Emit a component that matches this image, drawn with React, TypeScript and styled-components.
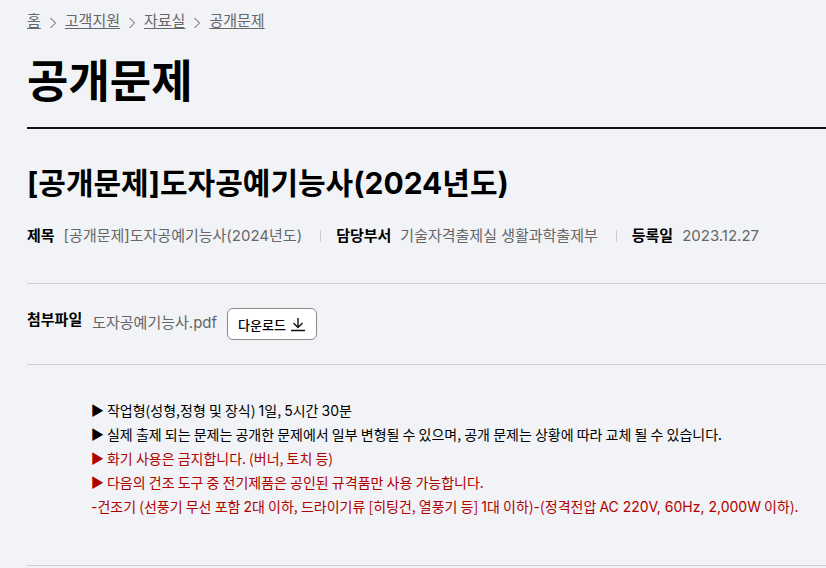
import React from "react";
import styled, { createGlobalStyle } from "styled-components";

const Global = createGlobalStyle`
  * { box-sizing: border-box; }
  body { margin: 0; background: #f1f3f6; color: #000; font-family: Inter, "Noto Sans CJK KR", sans-serif; }
  h1, h2, dl, dd, dt, p, ol { margin: 0; padding: 0; }
`;
const Page = styled.main`padding-left: 27px;`;
const Crumbs = styled.ol`
  display: flex; align-items: center; gap: 8px; list-style: none;
  padding-top: 11px; font-size: 15px; line-height: 20px;
`;
const Crumb = styled.li`display: flex; align-items: center; gap: 8px;`;
const CrumbLink = styled.a`color: #666; text-decoration: underline; text-underline-offset: 2px;`;
const Chevron = styled.svg`margin-top: 3px;`;
const Title = styled.h1`
  font-size: 45px; line-height: 60px; font-weight: 700;
  padding: 21px 0 15px; border-bottom: 2px solid #111;
`;
const Heading = styled.h2`font-size: 30px; line-height: 40px; font-weight: 700; padding-top: 34px;`;
const Meta = styled.dl`
  display: flex; align-items: center; padding: 21px 0 35px; font-size: 15px; line-height: 24px;
  border-bottom: 1px solid #ccced2; white-space: nowrap;
`;
const MetaItem = styled.div`
  display: flex; align-items: center; gap: 9px;
  & + &::before { content: ""; width: 1px; height: 12px; margin: 0 6px 0 18px; background: #ccced2; }
`;
const Term = styled.dt`font-weight: 700;`;
const Value = styled.dd`color: #666;`;
const Files = styled.section`
  display: flex; align-items: center; gap: 10px; padding: 24px 0;
  border-bottom: 1px solid #ccced2; font-size: 15px; line-height: 24px;
`;
const FilesLabel = styled.strong`padding-bottom: 8px;`;
const FileName = styled.span`color: #666; padding-bottom: 2px;`;
const Download = styled.button`
  display: flex; align-items: center; gap: 4px; height: 32px; padding: 0 10px;
  font: 500 13px Inter, "Noto Sans CJK KR", sans-serif; color: #000;
  background: #fff; border: 1px solid #8a8a8a; border-radius: 6px;
`;
const Body = styled.section`
  padding: 33px 0 47px 64px; border-bottom: 1px solid #ccced2; white-space: nowrap;
  font-family: "Noto Sans CJK KR", sans-serif; font-size: 14px; line-height: 24px;
`;
const Line = styled.p<{ $warn?: boolean }>`color: ${p => p.$warn ? "#b00000" : "#000"};`;
const Latin = styled.span`font-family: Inter, sans-serif; line-height: 1;`;
const Arrow = styled.span`font-family: Inter, "Noto Sans CJK KR", sans-serif; line-height: 1;`;

const crumbs = ["홈", "고객지원", "자료실", "공개문제"];

export default function App() {
  return (
    <>
      <Global />
      <Page>
        <nav>
          <Crumbs>
            {crumbs.map((c, i) => (
              <Crumb key={c}>
                {i > 0 && (
                  <Chevron width="8" height="12" viewBox="0 0 8 12" fill="none" stroke="#555">
                    <path d="M1.500 1l5 5-5 5" />
                  </Chevron>
                )}
                <CrumbLink href="#">{c}</CrumbLink>
              </Crumb>
            ))}
          </Crumbs>
        </nav>
        <Title>공개문제</Title>
        <Heading>[공개문제]도자공예기능사(2024년도)</Heading>
        <Meta>
          <MetaItem><Term>제목</Term><Value>[공개문제]도자공예기능사(2024년도)</Value></MetaItem>
          <MetaItem><Term>담당부서</Term><Value>기술자격출제실 생활과학출제부</Value></MetaItem>
          <MetaItem><Term>등록일</Term><Value>2023.12.27</Value></MetaItem>
        </Meta>
        <Files>
          <FilesLabel>첨부파일</FilesLabel>
          <FileName>도자공예기능사.pdf</FileName>
          <Download type="button">
            다운로드
            <svg width="16" height="16" viewBox="0 0 16 16" fill="none" stroke="#111" strokeWidth="1.4">
              <path d="M8 2v9.500M3.500 7L8 11.500 12.500 7M1 14.500h14" />
            </svg>
          </Download>
        </Files>
        <Body>
          <Line><Arrow>▶</Arrow> 작업형(성형,정형 및 장식) <Latin>1</Latin>일, <Latin>5</Latin>시간 <Latin>30</Latin>분</Line>
          <Line><Arrow>▶</Arrow> 실제 출제 되는 문제는 공개한 문제에서 일부 변형될 수 있으며, 공개 문제는 상황에 따라 교체 될 수 있습니다.</Line>
          <Line $warn><Arrow>▶</Arrow> 화기 사용은 금지합니다. (버너, 토치 등)</Line>
          <Line $warn><Arrow>▶</Arrow> 다음의 건조 도구 중 전기제품은 공인된 규격품만 사용 가능합니다.</Line>
          <Line $warn>
            <Latin>-</Latin>건조기 (선풍기 무선 포함 <Latin>2</Latin>대 이하, 드라이기류 [히팅건, 열풍기 등] <Latin>1</Latin>대 이하)<Latin>-</Latin>(정격전압 <Latin>AC 220V, 60Hz, 2,000W</Latin> 이하).
          </Line>
        </Body>
      </Page>
    </>
  );
}
